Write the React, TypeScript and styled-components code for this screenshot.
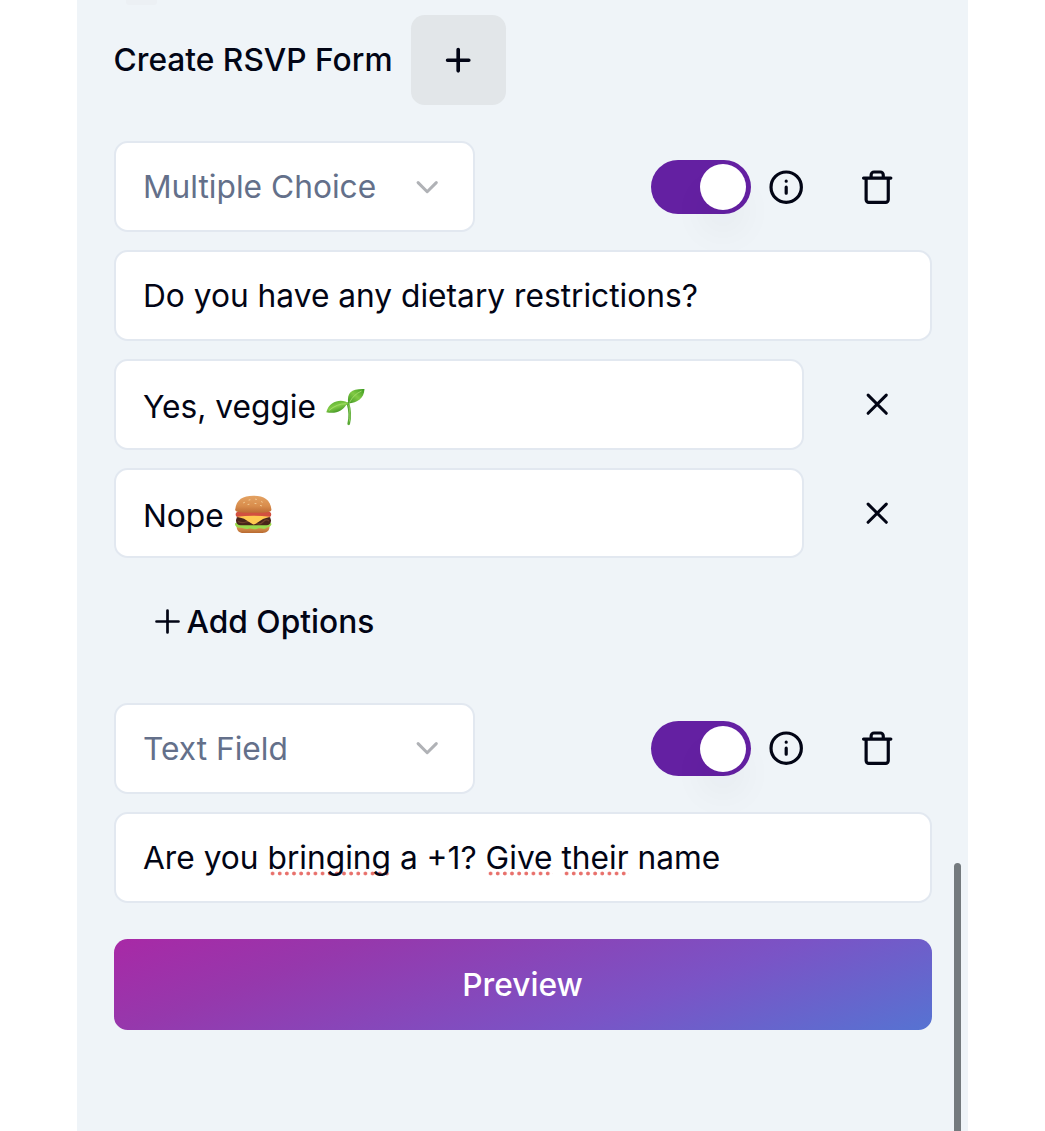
import React from "react";
import styled, { createGlobalStyle, css } from "styled-components";

const ink = "#020515";

const GlobalStyle = createGlobalStyle`
  *, *::before, *::after { box-sizing: border-box; }
  html, body { margin: 0; padding: 0; background: #fff; overflow: hidden; }
  body { font-family: Inter, "Liberation Sans", sans-serif; color: ${ink}; }
`;

const Page = styled.main`
  position: relative;
  width: 891px;
  height: 1131px;
  margin-left: 77px;
  padding: 0 36.5px;
  overflow: hidden;
  background: #eff4f8;
`;

const PreviousSection = styled.div`
  width: 31px;
  height: 5px;
  margin-left: 12px;
  border-radius: 0 0 3px 3px;
  background: #ecf0f4;
`;

const Header = styled.header`
  display: flex;
  align-items: center;
  height: 90.6px;
  margin-top: 9.5px;
`;

const Title = styled.h1`
  width: 297.5px;
  margin: 0;
  font-size: 31.7px;
  font-weight: 500;
  line-height: 45px;
  white-space: nowrap;
`;

const buttonReset = css`
  border: 0;
  padding: 0;
  margin: 0;
  font-family: inherit;
  color: inherit;
  background: none;
  display: flex;
  align-items: center;
  justify-content: center;
`;

const AddFieldButton = styled.button`
  ${buttonReset}
  width: 95px;
  height: 90.6px;
  border-radius: 13.6px;
  background: #e2e6e9;
`;

const Group = styled.section<{ $top: number }>`
  display: flex;
  flex-direction: column;
  gap: 18.2px;
  margin-top: ${(p) => p.$top}px;
`;

const Row = styled.div`
  display: flex;
  align-items: center;
  height: 90.6px;
  width: 818px;
`;

const Box = styled.div<{ $width: number; $muted?: boolean; $drop?: number }>`
  display: flex;
  align-items: center;
  flex: none;
  width: ${(p) => p.$width}px;
  height: 90.6px;
  padding: ${(p) => p.$drop ?? 0}px 27.5px 0;
  border: 2px solid #e2e8f0;
  border-radius: 13.6px;
  background: #fff;
  color: ${(p) => (p.$muted ? "#64708a" : ink)};
  font-size: 31.7px;
  line-height: 45px;
  white-space: pre;
`;

const SelectLabel = styled.span`
  flex: 1;
`;

const Controls = styled.div`
  display: flex;
  align-items: center;
  margin-left: auto;
  padding-right: 35.5px;
`;

const Track = styled.button`
  ${buttonReset}
  justify-content: flex-end;
  width: 100px;
  height: 54.5px;
  margin-right: 17.5px;
  padding: 0 4.5px;
  border-radius: 28px;
  background: #6420a2;
`;

const Thumb = styled.span`
  width: 46px;
  height: 46px;
  border-radius: 50%;
  background: #fff;
  box-shadow: 0 24px 36px 0 rgba(15, 23, 42, 0.045);
`;

const IconButton = styled.button<{ $left?: number }>`
  ${buttonReset}
  width: 37px;
  height: 37px;
  margin-left: ${(p) => p.$left ?? 0}px;
`;

const AddOptions = styled.button`
  ${buttonReset}
  align-self: flex-start;
  height: 90.6px;
  padding-left: 41.5px;
  gap: 6.5px;
  font-size: 31.7px;
  font-weight: 500;
  line-height: 45px;
`;

const Misspelled = styled.span`
  background-image: radial-gradient(circle, #e8706b 1.5px, transparent 2.3px);
  background-repeat: repeat-x;
  background-size: 7.15px 5px;
  background-position: 1px calc(100% - 1px);
`;

const PreviewButton = styled.button`
  ${buttonReset}
  width: 818px;
  height: 90.6px;
  margin-top: 36.3px;
  border-radius: 13.6px;
  color: #fff;
  background: linear-gradient(160deg, #a829a6 0%, #9638ac 24%, #7a54c6 66%, #5673d2 100%);
  font-size: 31.7px;
  font-weight: 500;
  line-height: 45px;
`;

const Scrollbar = styled.div`
  position: absolute;
  top: 863px;
  right: 7px;
  width: 7px;
  height: 290px;
  border-radius: 4px;
  background: #747a7e;
`;

type IconProps = { children: React.ReactNode; color?: string; weight?: number };

const Icon = ({ children, color = ink, weight = 2.1 }: IconProps) => (
  <svg
    width="36.4"
    height="36.4"
    viewBox="0 0 24 24"
    fill="none"
    stroke={color}
    strokeWidth={weight}
    strokeLinecap="round"
    strokeLinejoin="round"
  >
    {children}
  </svg>
);

const Chevron = () => (
  <Icon color="#b0b2b6" weight={2}>
    <path d="m6 9 6 6 6-6" />
  </Icon>
);

const Cross = () => (
  <Icon weight={2}>
    <path d="M18 6 6 18M6 6l12 12" />
  </Icon>
);

const Info = () => (
  <Icon>
    <circle cx="12" cy="12" r="10" />
    <path d="M12 16v-4M12 8h.01" />
  </Icon>
);

const Trash = () => (
  <Icon>
    <path d="M3 6h18M19.300 6v14.300a1.700 1.700 0 0 1-1.700 1.700H6.400a1.700 1.700 0 0 1-1.700-1.700V6M8 6V3.900c0-1 .9-1.900 1.900-1.900h4.200c1 0 1.900.9 1.900 1.900v2.100" />
  </Icon>
);

const EmojiSlot = styled.svg`
  display: block;
  flex: none;
  width: 40px;
  height: 40px;
  margin-left: 9px;
`;

const Seedling = () => (
  <EmojiSlot viewBox="0 0 40 40" role="img" aria-label="seedling">
    <defs>
      <linearGradient id="leafRight" x1="0" y1="1" x2="1" y2="0">
        <stop offset="0" stopColor="#3d9422" />
        <stop offset="0.5" stopColor="#82ca45" />
        <stop offset="1" stopColor="#3b9a20" />
      </linearGradient>
      <linearGradient id="leafLeft" x1="0" y1="0" x2="0.6" y2="1">
        <stop offset="0" stopColor="#51a92c" />
        <stop offset="0.55" stopColor="#83cb47" />
        <stop offset="1" stopColor="#368c1e" />
      </linearGradient>
    </defs>
    <path d="M23 17.500c1.800 6 2.500 12.500.7 20.300" fill="none" stroke="#58a934" strokeWidth="2.700" strokeLinecap="round" />
    <path d="M23.900 19c1 6 1.300 11.500.5 16.500" fill="none" stroke="#9bd367" strokeWidth="0.800" />
    <path d="M23.300 17.500C21.300 6.500 27 2.500 39.500 3C39 12.500 32.500 16.500 23.300 17.500Z" fill="url(#leafRight)" />
    <path d="M24 18C19 12.500 4.500 13.500 1.300 26.300C12 28.300 18 24 21.200 18.900Z" fill="url(#leafLeft)" />
    <path d="M24.500 16.500Q28.500 8.500 36.500 5M21 17.800Q12 17.500 4 24.500" fill="none" stroke="#b3e879" strokeWidth="0.900" opacity="0.750" />
  </EmojiSlot>
);

const Burger = () => (
  <EmojiSlot viewBox="0 0 40 40" role="img" aria-label="hamburger">
    <defs>
      <linearGradient id="bunTop" x1="0" y1="0" x2="0" y2="1">
        <stop offset="0" stopColor="#e3a263" />
        <stop offset="0.6" stopColor="#d98d4c" />
        <stop offset="1" stopColor="#bd6b35" />
      </linearGradient>
      <linearGradient id="bunBase" x1="0" y1="0" x2="0" y2="1">
        <stop offset="0" stopColor="#e7a45d" />
        <stop offset="1" stopColor="#b86a30" />
      </linearGradient>
    </defs>
    <path d="M3.500 30.500H36.500C37 35.500 34 38 29.500 38H10.500C6 38 3.500 35.500 3.500 30.500Z" fill="url(#bunBase)" />
    <path d="M2 28.500Q4 26.500 7 28.200H34Q37.500 26.500 38.500 29C38 32.500 35 31.300 33 33.300C30.500 35 28 32.500 25 33.500C21.500 35.500 18.500 32.500 15.500 33.700C12 35 10.500 32.500 7 32.800C4 32.500 2 31.500 2 28.500Z" fill="#9ad94c" />
    <rect x="3" y="21" width="35" height="9.300" rx="4.500" fill="#48251a" />
    <path d="M5 26.500Q9 28.500 13 27T22 28T30 27T36 26" fill="none" stroke="#70412b" strokeWidth="1.200" />
    <rect x="2.700" y="16.800" width="35.500" height="5.500" rx="2.700" fill="#d2503f" />
    <path d="M4 21.800Q20 19.800 37 21.800L30 24L22.200 29Q20.500 30 19 28.700L11 23.800Z" fill="#ffc951" />
    <path d="M2.200 14.500C3.300 4.500 10 .8 20.300.8S37.300 4.500 38.400 14.500C38.400 17.500 34 17.800 20.300 17.800S2.200 17.500 2.200 14.500Z" fill="url(#bunTop)" />
    <path d="M10.500 7.800l1-.4M16 5l1-.2M22.500 4.200l1 .2M28.500 6.700l.8.4M15 9.500l1-.2M22 8.500l1 .1M27.500 10.500l1 .3" stroke="#f5d09b" strokeWidth="0.900" strokeLinecap="round" />
  </EmojiSlot>
);

const FieldHeader = ({ label }: { label: string }) => (
  <Row>
    <Box $width={361.5} $muted>
      <SelectLabel>{label}</SelectLabel>
      <Chevron />
    </Box>
    <Controls>
      <Track aria-label="Required">
        <Thumb />
      </Track>
      <IconButton aria-label="Info">
        <Info />
      </IconButton>
      <IconButton $left={54} aria-label="Delete">
        <Trash />
      </IconButton>
    </Controls>
  </Row>
);

const Option = ({ text, children }: { text: string; children: React.ReactNode }) => (
  <Row>
    <Box $width={690.5} $drop={4}>
      {text}
      {children}
    </Box>
    <IconButton $left={55} aria-label="Remove option">
      <Cross />
    </IconButton>
  </Row>
);

export default function App() {
  return (
    <>
      <GlobalStyle />
      <Page>
        <PreviousSection />
        <Header>
          <Title>Create RSVP Form</Title>
          <AddFieldButton aria-label="Add field">
            <Icon weight={2.4}>
              <path d="M5 12h14M12 5v14" />
            </Icon>
          </AddFieldButton>
        </Header>

        <Group $top={36.4}>
          <FieldHeader label="Multiple Choice" />
          <Box $width={818}>Do you have any dietary restrictions?</Box>
          <Option text="Yes, veggie">
            <Seedling />
          </Option>
          <Option text="Nope">
            <Burger />
          </Option>
          <AddOptions>
            <svg width="25" height="25" viewBox="0 0 25 25" fill="none" stroke={ink} strokeWidth="2.7" strokeLinecap="round">
              <path d="M1.500 12.500h22M12.500 1.500v22" />
            </svg>
            Add Options
          </AddOptions>
        </Group>

        <Group $top={36.2}>
          <FieldHeader label="Text Field" />
          <Box $width={818}>
            <span>
              Are you <Misspelled>bringing</Misspelled> a +1? <Misspelled>Give</Misspelled>{" "}
              <Misspelled>their</Misspelled> name
            </span>
          </Box>
        </Group>

        <PreviewButton>Preview</PreviewButton>
        <Scrollbar />
      </Page>
    </>
  );
}
